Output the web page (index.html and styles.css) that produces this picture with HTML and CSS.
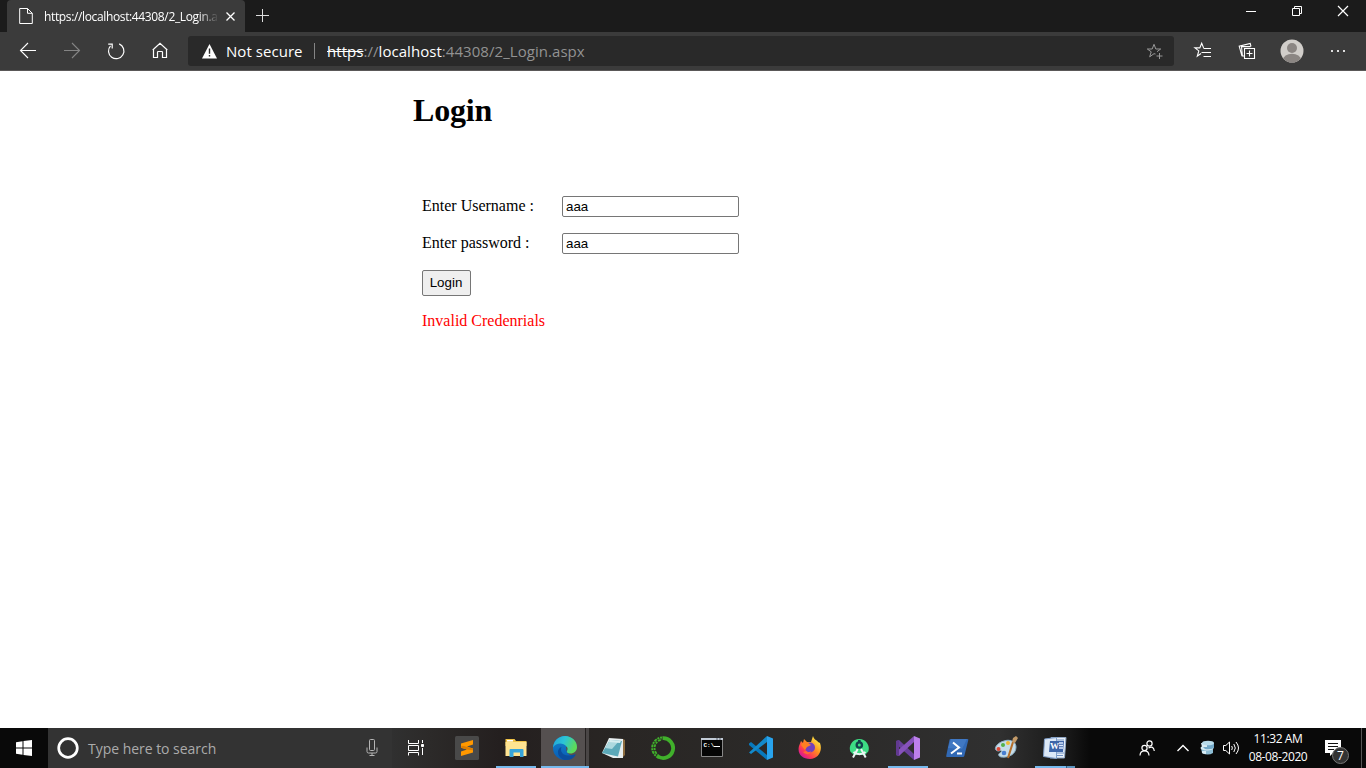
FILE: index.html
```html
<!DOCTYPE html>
<html lang="en">
<head>
<meta charset="utf-8">
<title>Login</title>
<link rel="stylesheet" href="styles.css">
</head>
<body>
<header class="tabs">
  <div class="tab">
    <svg class="page-icon" width="14" height="16" viewBox="0 0 14 16" fill="none" stroke="#fff"><path d="M.7.5h7.8l4.8 4.8v10.2H.7zM8.500.5v4.800h4.800"/></svg>
    <span class="tab-title">https://localhost:44308/2_Login.a</span>
    <svg class="tab-close" width="9" height="9" viewBox="0 0 9 9" stroke="#fff" stroke-width="1.300"><path d="M.5.5l8 8M8.500.5l-8 8"/></svg>
  </div>
  <svg class="new-tab" width="13" height="13" viewBox="0 0 13 13" stroke="#ddd"><path d="M6.500 0v13M0 6.500h13"/></svg>
  <div class="window-controls">
    <svg width="46" height="24" viewBox="0 0 46 24" stroke="#fff"><path d="M18 11.500h10"/></svg>
    <svg width="46" height="24" viewBox="0 0 46 24" fill="none" stroke="#fff"><path d="M18.500 8.500h7v7h-7zM20.500 8v-1.500h7v7H26"/></svg>
    <svg width="46" height="24" viewBox="0 0 46 24" stroke="#fff" stroke-width="1.200"><path d="M18 6l10 10M28 6L18 16"/></svg>
  </div>
</header>
<nav class="toolbar">
  <div class="nav-icons">
    <svg width="44" height="38" viewBox="0 0 44 38" fill="none" stroke="#fff" stroke-width="1.100"><path d="M14.500 18.500H30M22 11l-7.500 7.500L22 26"/></svg>
    <svg width="44" height="38" viewBox="0 0 44 38" fill="none" stroke="#858585" stroke-width="1.100"><path d="M14 18.500h15.500M22 11l7.500 7.500L22 26"/></svg>
    <svg width="44" height="38" viewBox="0 0 44 38" fill="none" stroke="#fff" stroke-width="1.200"><path d="M25.200 11.900A7.700 7.700 0 1 1 16.500 13.800M14.200 12.200h4v4.300"/></svg>
    <svg width="44" height="38" viewBox="0 0 44 38" fill="none" stroke="#fff" stroke-width="1.200"><path d="M15.500 17.300l6.500-6 6.500 6v8.200h-4v-5.300q0-.7-.7-.7h-3.600q-.7 0-.7.7v5.300h-4v-8.200M15.500 17.300l-.8.700M28.500 17.300l.8.700"/></svg>
  </div>
  <div class="address">
    <svg class="warning" width="15" height="15" viewBox="0 0 15 15"><path fill="#fff" d="M7.500 0L15 14.500H0z"/><path stroke="#292929" stroke-width="1.400" d="M7.500 4.500v5.300M7.500 11v1.500"/></svg>
    <span class="not-secure">Not secure</span>
    <span class="divider"></span>
    <span class="url"><s>https</s>://<b>localhost</b>:44308/2_Login.aspx</span>
    <svg class="add-favorite" width="18" height="16" viewBox="0 0 18 16" fill="none" stroke="#999"><path d="M9.500 11L8 10.700l-4.300 3.100 1.500-5L1.300 6h4.900L8 1.300 9.800 6h4.900L11 8.700M13.500 10v6M10.500 13h6"/></svg>
  </div>
  <div class="tools">
    <svg width="44" height="38" viewBox="0 0 44 38" fill="none" stroke="#fff" stroke-width="1.100"><path d="M19 21.500l-3.700 2.700 1.500-5.300-3.900-3h4.900l1.900-4.600 1.900 4.600M21.500 16.500H29M19.500 20.500H29M21.500 24.500H29"/></svg>
    <svg width="44" height="38" viewBox="0 0 44 38" fill="none" stroke="#fff" stroke-width="1.100"><path d="M18.500 16.500h10v10h-10zM23.500 18.500v6M20.500 21.500h6M16 24.200l-2.800-10 11-2.700.8 3M18 24h-1.600L15.500 14.600h9"/></svg>
    <svg width="44" height="38" viewBox="0 0 44 38"><defs><clipPath id="avatar"><circle cx="22" cy="19" r="11.500"/></clipPath></defs><g clip-path="url(#avatar)"><path fill="#d1ceca" d="M10 7h24v24H10z"/><circle cx="22" cy="16" r="5" fill="#8b8683"/><ellipse cx="22" cy="28" rx="9" ry="6.300" fill="#8b8683"/></g></svg>
    <svg width="48" height="38" viewBox="0 0 48 38" fill="#ddd"><path d="M17 18h2v2h-2zM23 18h2v2h-2zM29 18h2v2h-2z"/></svg>
  </div>
</nav>
<main class="page">
  <h1>Login</h1>
  <form class="login-form">
    <label for="user">Enter Username :</label><input id="user" type="text" value="aaa">
    <label for="pass">Enter password :</label><input id="pass" type="text" value="aaa">
    <button type="button">Login</button>
    <p class="error">Invalid Credenrials</p>
  </form>
</main>
<footer class="taskbar">
  <svg class="start" width="48" height="40" viewBox="0 0 48 40" fill="#fff"><path d="M16 14.200l6.500-.9v6.200H16zM23.500 13.100l8.500-1.200v7.600h-8.500zM16 20.500h6.500v6.200l-6.500-.9zM23.500 20.500H32v7.600l-8.500-1.200z"/></svg>
  <div class="search">
    <svg width="22" height="22" viewBox="0 0 22 22"><circle cx="11" cy="11" r="9.300" fill="none" stroke="#fff" stroke-width="2.700"/></svg>
    <span>Type here to search</span>
    <svg class="mic" width="12" height="18" viewBox="0 0 12 18" fill="none" stroke="#b5b5b5"><rect x="3.500" y=".5" width="5" height="11" rx="1"/><path d="M1 8.500v4q0 1.500 1.500 1.500h7q1.500 0 1.500-1.500v-4M6 14v2.500M3.500 16.500h5"/></svg>
  </div>
  <svg class="task-view" width="50" height="40" viewBox="0 0 50 40" fill="none" stroke="#fff"><path d="M16.500 12v3.500h10V12M16.500 17.500h10v5H16.500zM16.500 27.500v-3h10v3M30.500 12v3M30.500 20v7"/><path fill="#fff" d="M29.500 16.500h2v2h-2z"/></svg>
  <div class="apps">
    <div class="app"><svg width="24" height="24" viewBox="0 0 24 24"><rect width="24" height="24" rx="1.500" fill="#494949"/><path fill="#ff9800" d="M6 7.500L18 4v4.500l-6 2 6 2v4L6 20v-4.500l6-2-6-1.700z"/><path fill="#dd7d00" d="M6 10.500l2-.8 10 3v1.500l-6-.8-6-1.600z"/></svg></div>
    <div class="app running"><svg width="24" height="24" viewBox="0 0 24 24"><path fill="#f1c347" d="M1.500 3h9l1.500 2h10.500v5h-21z"/><path fill="#fff" d="M3 4h6v1.500H3z"/><path fill="#ffe492" d="M1.500 6h21v14h-21z"/><path fill="#37a5db" d="M5.500 21v-7q0-1 1-1h12q1 0 1 1v7H16v-4.500H9.500V21z"/></svg></div>
    <div class="app active"><svg width="24" height="24" viewBox="0 0 24 24"><defs><linearGradient id="edge-top" x1="0" y1="0" x2="1" y2=".35"><stop stop-color="#249fd7"/><stop offset=".5" stop-color="#2bc4d7"/><stop offset="1" stop-color="#5cdb5a"/></linearGradient><linearGradient id="edge-base" x1="0" y1="0" x2="0" y2="1"><stop stop-color="#1684cb"/><stop offset="1" stop-color="#075cb5"/></linearGradient></defs><circle cx="12" cy="12" r="12" fill="url(#edge-base)"/><path fill="#55504f" d="M13 11h12v6q-3 3-8 2-4-2-4-8z"/><path fill="url(#edge-top)" d="M0 11.500C.5 5 5.500 0 12 0c6.700 0 12 5 12 11 0 4-3 6.500-6.500 6.500-3 0-4.200-1.300-3.500-2.500 1-1.700.7-3.300-.4-4.500C10 6 3 6.500 0 11.500z"/><path fill="#0b4d9d" d="M8.500 11C7 15 9 19 14.500 19.500c3 .3 5.500-.7 7.500-1.300q1 0 .3 1.200c-2.500 4-7.600 5.500-12.300 4C3 20 4 12.500 8.500 11z"/></svg></div>
    <div class="app"><svg width="24" height="24" viewBox="0 0 24 24"><path fill="#8d6d40" d="M21 3l2 1v15l-3 3z"/><path fill="#e8eff0" d="M7 2l14 1v19H11L0 17z"/><path fill="#5ca9b9" d="M8 4l12 1-4 15.500L0 17z"/><path fill="#add9df" d="M8 4l9 1-7 8-7-1z"/><path fill="#d8eef0" d="M8 4l11 1-1 2L7 6z"/></svg></div>
    <div class="app"><svg width="24" height="24" viewBox="0 0 24 24" fill="none" stroke="#40b02b"><path stroke-width="3.800" d="M11.500 2.200A9.900 9.900 0 1 1 7 20.500"/><path stroke-width="2" stroke-dasharray="3 .8 2 .8" d="M8 21.800A10.500 10.500 0 0 1 11 1.500"/><path stroke-width="1.800" stroke-dasharray="2 1 3 1" d="M8 19.700A8.700 8.700 0 0 1 11 3.500"/></svg></div>
    <div class="app"><svg width="24" height="24" viewBox="0 0 24 24"><path fill="#050505" stroke="#888" d="M1.500 2.500h21v18h-21z"/><path fill="#c2cbd6" d="M1 2h22v2H1z"/><path stroke="#59616c" d="M16 3h2M19 3h2"/><text x="3.500" y="11" class="prompt">C:\</text><path stroke="#fff" d="M14 10.500h6"/></svg></div>
    <div class="app"><svg width="24" height="24" viewBox="0 0 24 24"><path fill="#0879bd" d="M0 7.500L2 6l16 13v5L0 9z"/><path fill="#138acb" d="M0 16.500L18 0v6L2 18z"/><path fill="#28a3ed" d="M18 0l6 2.500v19L18 24z"/></svg></div>
    <div class="app"><svg width="24" height="24" viewBox="0 0 24 24"><defs><linearGradient id="fox" x1=".9" y1=".1" x2=".2" y2=".9"><stop stop-color="#fff34a"/><stop offset=".45" stop-color="#ff8d20"/><stop offset=".8" stop-color="#ff3656"/><stop offset="1" stop-color="#d91c90"/></linearGradient></defs><path fill="url(#fox)" d="M1 10L3 5l2 2 1-4 3 3h4l2-6c1 4 4 4 5 6l2 1c3 8-2 16-10 16C4 23-1 18 1 10z"/><circle cx="12" cy="11.500" r="5" fill="#7440bd"/><path fill="#ff7f22" d="M4 7l5-1 4 3-4 2-2 3-4-5z"/><path fill="#ff6a35" d="M8 15c2 2 4 1 5 0-1 4-5 4-8 1z"/></svg></div>
    <div class="app"><svg width="24" height="24" viewBox="0 0 24 24"><path fill="#3ddc84" d="M3.300 15.500A9.500 9.500 0 1 1 21.300 15.500L18 19H7z"/><circle cx="12.300" cy="9" r="3.800" fill="#13404b"/><path fill="#13404b" d="M11 4h2.600v4H11z"/><circle cx="12.300" cy="9" r="1.500" fill="#3ddc84"/><path fill="none" stroke="#edf4f4" stroke-width="2" d="M10.700 13L6 21.500M14 13l4.700 8.500M6.500 16q6 4.500 12 0"/></svg></div>
    <div class="app running"><svg width="24" height="24" viewBox="0 0 24 24"><path fill="#68409b" d="M0 5l3-1 15 14v6L0 8z"/><path fill="#8652bb" d="M0 19v-3L18 0v6L3 20z"/><path fill="#613990" d="M0 5l3-1v16l-3-1z"/><path fill="#bd80ec" d="M18 0l6 2.500v19L18 24z"/></svg></div>
    <div class="app"><svg width="24" height="24" viewBox="0 0 24 24"><path fill="#3169b5" d="M5.500 3h17q1 0 .8 1l-4 16q-.3 1-1.300 1H2q-1 0-.8-1L4.500 4q.2-1 1-1z"/><path fill="#4f87d1" d="M6 3h16l-5 10-14-1z" opacity=".5"/><path fill="none" stroke="#fff" stroke-width="2" d="M8 6.500l6 5-8 6M12 17.500h5"/></svg></div>
    <div class="app"><svg width="24" height="24" viewBox="0 0 24 24"><path fill="#c6dce9" stroke="#8db1c5" d="M10 5c5-2 12 0 12 6 0 7-7 11-15 10-3-1-3-3-1-4 3-2 1-3-1-2-7 0-3-8 5-10z"/><circle cx="4.500" cy="13" r="2" fill="#de4836"/><circle cx="9" cy="9" r="2" fill="#52b24b"/><circle cx="14" cy="7" r="2" fill="#efba36"/><circle cx="10" cy="17" r="2.300" fill="#477ed0"/><path stroke="#b46e29" stroke-width="2" d="M14 22l5-16"/><path fill="#c29a69" d="M18 6l1-4 3-2 2 2-3 5z"/></svg></div>
    <div class="app running word"><svg width="24" height="24" viewBox="0 0 24 24"><path fill="#e8eff8" stroke="#91a8c7" d="M8 1.500h15L21.500 22H7z"/><path stroke="#7294c6" d="M9 4h12M10 17h11M10 19.500h10"/><path fill="#dce8f7" stroke="#809fc9" d="M1.500 3l12-1.500v21l-13-2z"/><path fill="#3e65a8" d="M7 5h14l-1 11H6z"/><text x="7" y="13" class="word-letter">W</text><path stroke="#dce9ff" stroke-width="1.300" d="M16 7h4M16 9.500h4M16 12h4"/></svg></div>
  </div>
  <div class="tray">
    <svg class="people" width="16" height="17" viewBox="0 0 16 17" fill="none" stroke="#fff" stroke-width="1.200"><circle cx="5.500" cy="8" r="2.600"/><path d="M1 15.500q.2-4.700 4.500-4.700t4.500 4.700"/><circle cx="10.500" cy="3.500" r="2.600"/><path d="M9.500 8q5-2.800 5.800 3"/></svg>
    <svg class="chevron" width="12" height="8" viewBox="0 0 12 8" fill="none" stroke="#fff" stroke-width="1.400"><path d="M.5 7L6 1.500 11.500 7"/></svg>
    <svg class="disks" width="15" height="16" viewBox="0 0 15 16"><path fill="#8dbdd5" d="M1 8h12v5q-5 3-11 0z"/><ellipse cx="7" cy="8" rx="6.500" ry="2.500" fill="#d5eaf2"/><path fill="#73a9c8" d="M3 3h11v5q-4 2-9 1l-2-2z"/><path fill="#d9edf5" d="M1 3h6v4H2zM2 11h4v3q-3 0-4-1z"/><ellipse cx="8" cy="3" rx="6" ry="2.300" fill="#b9dceb"/></svg>
    <svg class="volume" width="17" height="14" viewBox="0 0 17 14" fill="none" stroke="#fff"><path d="M.5 4.500h2.300L6.500 1v12L2.800 9.500H.5zM8.700 5q1.300 2 0 4M10.800 3q3 4 0 8M13 1q5 6 0 12"/></svg>
    <div class="clock"><span class="time">11:32 AM</span><span class="date">08-08-2020</span></div>
    <svg class="action" width="26" height="26" viewBox="0 0 26 26"><path fill="#fff" d="M1 1h16v13H9l-3 3v-3H1z"/><path stroke="#111" d="M4 4.500h10M4 7.500h10M4 10.500h6"/><circle cx="16.500" cy="16.500" r="8" fill="#333" stroke="#777"/><text x="16.500" y="20.800" class="badge">7</text></svg>
    <span class="show-desktop"></span>
  </div>
</footer>
</body>
</html>
```
FILE: styles.css
```css
* { box-sizing: border-box; }
body { margin: 0; width: 1366px; height: 768px; overflow: hidden; display: flex; flex-direction: column; background: #fff; font-family: "Open Sans", "Noto Sans", sans-serif; }
svg { display: block; flex: none; }
.tabs { height: 32px; flex: none; display: flex; background: #1b1b1b; }
.tab { width: 238px; margin-left: 7px; background: #3b3b3b; border-radius: 4px 4px 0 0; display: flex; align-items: center; color: #fff; }
.page-icon { margin-left: 12px; }
.tab-title { width: 175px; margin-left: 11px; white-space: nowrap; font-size: 12px; letter-spacing: -.36px; -webkit-mask-image: linear-gradient(90deg, #000 88%, transparent); mask-image: linear-gradient(90deg, #000 88%, transparent); }
.tab-close { margin-left: 7px; }
.new-tab { margin: 9px 0 0 11px; }
.window-controls { display: flex; margin-left: auto; }
.toolbar { height: 39px; flex: none; background: #3b3b3b; border-bottom: 1px solid #5a5858; display: flex; align-items: center; }
.nav-icons { display: flex; padding-left: 6px; width: 188px; }
.address { width: 986px; height: 30px; background: #292929; border-radius: 3px; display: flex; align-items: center; color: #fff; font-size: 15px; white-space: nowrap; }
.warning { margin-left: 14px; }
.not-secure { width: 80px; margin-left: 9px; letter-spacing: .05px; }
.divider { width: 1px; height: 16px; margin: 0 12px 0 8px; background: #858585; }
.url { color: #929292; letter-spacing: .05px; }
.url s, .url b { color: #fff; font-weight: 400; }
.add-favorite { margin: 0 10px 0 auto; }
.tools { display: flex; padding-left: 8px; margin-right: -2px; }
.page { flex: 1; padding: 21px 0 0 413px; font-family: "Liberation Serif", serif; font-size: 16px; }
h1 { margin: 0; font-size: 32px; line-height: 37px; letter-spacing: -.2px; }
.login-form { display: grid; grid-template-columns: 140px 177px; grid-template-rows: 21px 21px 26px 18px; row-gap: 16px; padding: 67px 0 0 9px; align-items: center; font-size: 16px; line-height: 18px; }
.login-form label { white-space: nowrap; padding-bottom: 2px; }
.login-form input { width: 177px; height: 21px; border: 1px solid #767676; border-radius: 2px; padding: 1px 3px; font: 13.333px "Liberation Sans", sans-serif; }
.login-form button { width: 49px; height: 26px; padding: 0 1px 1px 0; border: 1px solid #767676; border-radius: 2px; background: #efefef; font: 13.333px "Liberation Sans", sans-serif; }
.error { grid-column: 1 / -1; margin: 0; color: #f00; }
.taskbar { height: 40px; flex: none; display: flex; background: linear-gradient(90deg, #090909 0, #090909 48px, #303030 392px, #2c2a29 430px, #241f1f 500px, #292624 620px, #2c2b2a 850px, #303030 1000px, #171717 1070px, #090909 1090px, #090909); color: #fff; }
.search { width: 344px; background: #333; display: flex; align-items: center; padding-left: 9px; color: #ababab; font-size: 14px; white-space: nowrap; }
.search span { margin-left: 9px; letter-spacing: -.03px; }
.mic { margin: 0 14px 0 auto; }
.apps { display: flex; }
.app { width: 49px; height: 40px; display: flex; align-items: center; justify-content: center; }
.running { background: linear-gradient(#76b9ed, #76b9ed) 5px 38px / 40px 2px no-repeat; }
.active { background: linear-gradient(#76b9ed, #76b9ed) 1px 38px / 48px 2px no-repeat, linear-gradient(90deg, transparent 1px, #555050 1px, #555050 45px, #252121 45px, #252121 46px, #4a4646 46px, #4a4646 49px); }
.word { background: linear-gradient(90deg, #76b9ed 31px, #365f80 31px, #365f80 32px, #5c94bf 32px) 5px 38px / 40px 2px no-repeat; }
.prompt { fill: #fff; font: bold 6px "Liberation Mono", monospace; }
.word-letter { fill: #fff; font: bold 9px "Liberation Serif", serif; }
.tray { display: flex; align-items: center; margin-left: auto; width: 227px; }
.chevron { margin-left: 22px; }
.disks { margin-left: 11px; }
.volume { margin-left: 8px; }
.clock { width: 60px; margin-left: 8px; display: flex; flex-direction: column; align-items: center; font-size: 12px; line-height: 18px; white-space: nowrap; }
.time { letter-spacing: -.4px; }
.date { letter-spacing: -.4px; }
.action { margin: 7px 0 0 16px; }
.badge { fill: #fff; font-size: 12px; text-anchor: middle; }
.show-desktop { width: 1px; height: 40px; margin-left: auto; margin-right: 4px; background: #555; }
```
